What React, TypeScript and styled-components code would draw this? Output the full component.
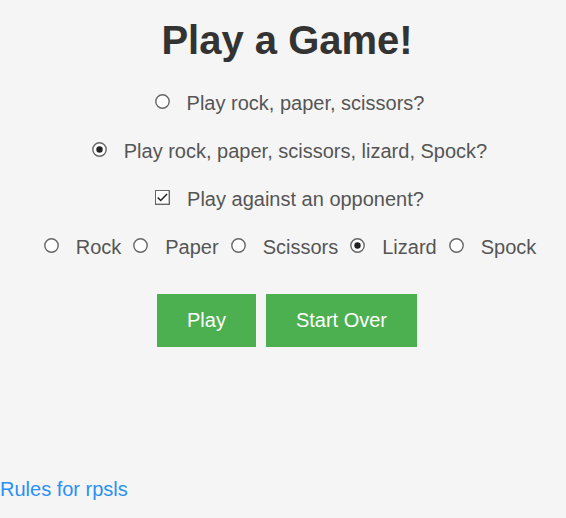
import React, { useState } from "react";
import styled, { createGlobalStyle } from "styled-components";

const GlobalStyle = createGlobalStyle`
  * { box-sizing: border-box; }
  body {
    margin: 0;
    background: #f5f5f5;
    color: #555;
    font: 20px/24px "Liberation Sans", Arial, sans-serif;
  }
`;

const Page = styled.main`
  display: flex;
  flex-direction: column;
  padding: 16px 0;
`;

const Title = styled.h1`
  margin: 0 0 27px;
  padding-left: 8px;
  font-size: 40px;
  line-height: 48px;
  text-align: center;
  color: #333;
`;

const Form = styled.form`
  display: flex;
  flex-direction: column;
  align-items: center;
  gap: 24px;
`;

const Choices = styled.div`
  display: flex;
  justify-content: center;
  gap: 12px;
  padding-left: 14px;
`;

const Choice = styled.label`
  display: flex;
  align-items: center;
  gap: 17px;
  white-space: nowrap;
`;

const SingleChoice = styled(Choice)`
  padding-left: 13px;
`;

const RadioBox = styled.span`
  display: grid;
  flex: none;
  margin-bottom: 4px;
  > * { grid-area: 1 / 1; }
  svg { pointer-events: none; }
  .mark { visibility: hidden; }
  input:checked + svg .mark { visibility: visible; }
`;

const ChoiceInput = styled.input`
  appearance: none;
  width: 15px;
  height: 15px;
  margin: 0;
`;

const Actions = styled.div`
  display: flex;
  gap: 10px;
  margin-top: 11px;
  padding-left: 8px;
`;

const Button = styled.button`
  border: 0;
  padding: 14px 30px 15px;
  background: #4caf50;
  color: #fff;
  font: inherit;
`;

const RulesLink = styled.a`
  align-self: flex-start;
  margin-top: 130px;
  color: #2a90f5;
  text-decoration: none;
`;

type ControlProps = {
  name: string;
  checked: boolean;
  onChange: () => void;
};

function Radio(props: ControlProps) {
  return (
    <RadioBox>
      <ChoiceInput type="radio" {...props} />
      <svg width="15" height="15" viewBox="0 0 15 15" aria-hidden="true">
        <circle cx="7.5" cy="7.5" r="6.7" fill="#fff" stroke="#666" strokeWidth="1.4" />
        <circle className="mark" cx="7.5" cy="7.5" r="3.2" fill="#222" />
      </svg>
    </RadioBox>
  );
}

function Tick(props: ControlProps) {
  return (
    <RadioBox>
      <ChoiceInput type="checkbox" {...props} />
      <svg width="15" height="15" viewBox="0 0 15 15" fill="none" aria-hidden="true">
        <path d="M0 0h15v15H0z" fill="#666" />
        <path d="M1 1h12.6v12.6H1z" fill="#fff" />
        <path className="mark" d="M2.7 7.5 5.7 10.5 12 4" stroke="#222" strokeWidth="1.5" />
      </svg>
    </RadioBox>
  );
}

const moves = ["Rock", "Paper", "Scissors", "Lizard", "Spock"];

export default function App() {
  const [game, setGame] = useState("rpsls");
  const [opponent, setOpponent] = useState(true);
  const [move, setMove] = useState("Lizard");
  return (
    <Page>
      <GlobalStyle />
      <Title>Play a Game!</Title>
      <Form onSubmit={(e) => e.preventDefault()}>
        <SingleChoice>
          <Radio name="game" checked={game === "rps"} onChange={() => setGame("rps")} />
          Play rock, paper, scissors?
        </SingleChoice>
        <SingleChoice>
          <Radio name="game" checked={game === "rpsls"} onChange={() => setGame("rpsls")} />
          Play rock, paper, scissors, lizard, Spock?
        </SingleChoice>
        <SingleChoice>
          <Tick name="opponent" checked={opponent} onChange={() => setOpponent(!opponent)} />
          Play against an opponent?
        </SingleChoice>
        <Choices>
          {moves.map((m) => (
            <Choice key={m}>
              <Radio name="move" checked={move === m} onChange={() => setMove(m)} />
              {m}
            </Choice>
          ))}
        </Choices>
        <Actions>
          <Button type="submit">Play</Button>
          <Button type="button">Start Over</Button>
        </Actions>
      </Form>
      <RulesLink href="#rules">Rules for rpsls</RulesLink>
    </Page>
  );
}
